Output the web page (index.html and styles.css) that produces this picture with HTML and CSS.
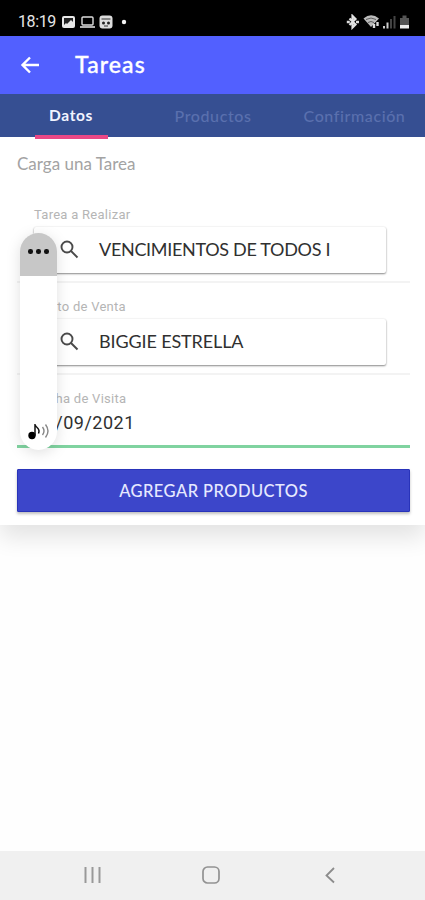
FILE: index.html
```html
<!DOCTYPE html>
<html lang="es">
<head>
<meta charset="utf-8">
<title>Tareas</title>
<link rel="stylesheet" href="styles.css">
</head>
<body>
<div class="screen">
  <div class="status">
    <span class="clock">18:19</span>
    <svg class="status-left" width="66" height="16" viewBox="0 0 66 16">
      <rect x="1" y="2" width="13" height="12" rx="2" fill="#e8e8e8"/>
      <path d="M3 11V4h9v4l-2-2-4 4-1-1z" fill="#222"/>
      <rect x="21" y="3" width="11" height="8" rx="1" fill="none" stroke="#ddd" stroke-width="1.4"/>
      <path d="M19 13h15" stroke="#ddd" stroke-width="1.6"/>
      <rect x="38.500" y="1.500" width="13" height="13" rx="3" fill="#ddd"/>
      <path d="M40.500 5h9M43 12h4" stroke="#333" stroke-width="1.200"/>
      <circle cx="42.500" cy="9" r="1.500" fill="#222"/><circle cx="47.500" cy="9" r="1.500" fill="#222"/>
      <circle cx="63" cy="8" r="2.200" fill="#f4f4f4"/>
    </svg>
    <svg class="status-right" width="64" height="16" viewBox="0 0 64 16">
      <path d="M3.500 4.500l6 6-3 3V2l3 3-6 6" fill="none" stroke="#e2e2e2" stroke-width="2.200"/>
      <path d="M.8 8h3M10 8h3" stroke="#ddd" stroke-width="2.400"/>
      <path d="M17.500 4.500Q25 -2 33 4.500L25 13z" fill="#bbb"/>
      <path d="M20 5.500q5-3 10 0M22 8.500q3-2 6 0" fill="none" stroke="#444" stroke-width=".8"/>
      <path d="M28 10v4M31.500 8v4" stroke="#ddd" stroke-width="2.400"/>
      <path d="M38 12v2.500M41.500 8.500v6" stroke="#ccc" stroke-width="2"/>
      <path d="M45 5v9.500M48.500 2v12.500" stroke="#444" stroke-width="2"/>
      <path d="M54 4h2.500V1.500h4V4H63v7h-9z" fill="#555"/>
      <path d="M54 11h9v3.500h-9z" fill="#eee"/>
    </svg>
  </div>

  <header class="appbar">
    <svg width="20" height="20" viewBox="0 0 20 20" fill="none" stroke="#fff" stroke-width="2.400"><path d="M19 10H2.500M10 2.500L2.500 10l7.500 7.500"/></svg>
    <h1>Tareas</h1>
  </header>

  <nav class="tabs">
    <span class="tab active">Datos</span>
    <span class="tab products">Productos</span>
    <span class="tab confirm">Confirmación</span>
  </nav>

  <main class="card">
    <h2>Carga una Tarea</h2>
    <section class="field first">
      <label>Tarea a Realizar</label>
      <div class="picker">
        <svg width="19" height="19" viewBox="0 0 19 19" fill="none" stroke="#4a4a4a" stroke-width="1.900"><circle cx="7" cy="7" r="5.500"/><path d="M11 11l6.500 6.500"/></svg>
        <span class="task">VENCIMIENTOS DE TODOS I</span>
      </div>
    </section>
    <section class="field">
      <label>Punto de Venta</label>
      <div class="picker">
        <svg width="19" height="19" viewBox="0 0 19 19" fill="none" stroke="#4a4a4a" stroke-width="1.900"><circle cx="7" cy="7" r="5.500"/><path d="M11 11l6.500 6.500"/></svg>
        <span class="store">BIGGIE ESTRELLA</span>
      </div>
    </section>
    <section class="field date">
      <label>Fecha de Visita</label>
      <div class="value">20/09/2021</div>
    </section>
    <button class="submit">AGREGAR PRODUCTOS</button>
  </main>

  <aside class="volume">
    <div class="more"><i></i><i></i><i></i></div>
    <svg width="24" height="20" viewBox="0 0 24 20">
      <circle cx="5" cy="14.500" r="3.700" fill="#000"/>
      <path d="M8 14.500V3c.5 4.500 6 4 3.500 9.500" fill="none" stroke="#111" stroke-width="1.500"/>
      <path d="M15.500 6q3 4 0 8M18.500 3.500q5 6.500 0 13" fill="none" stroke="#888" stroke-width="1.400"/>
    </svg>
  </aside>

  <footer class="navbar">
    <svg width="17" height="18" viewBox="0 0 17 18" stroke="#999" stroke-width="2"><path d="M1.500 1v16M8.500 1v16M15.500 1v16"/></svg>
    <svg class="home" width="18" height="18" viewBox="0 0 18 18" fill="none" stroke="#929292" stroke-width="1.700"><rect x="1" y="1" width="16" height="16" rx="4.500"/></svg>
    <svg width="10" height="18" viewBox="0 0 10 18" fill="none" stroke="#8c8c8c" stroke-width="1.800"><path d="M9 2L1.500 9.500 9 16.500"/></svg>
  </footer>
</div>
</body>
</html>
```
FILE: styles.css
```css
* { box-sizing: border-box; }
body { margin: 0; background: #fff; font-family: Lato, "Open Sans", sans-serif; }
.screen { position: relative; width: 425px; height: 900px; display: flex; flex-direction: column; overflow: hidden; background: #fefefe; }
svg { display: block; flex: none; }

.status { height: 36px; flex: none; background: #000; display: flex; align-items: center; padding: 8px 15px 0 18px; }
.clock { width: 43px; font: 400 16px/20px Roboto, sans-serif; letter-spacing: -.4px; color: #e6e6e6; }
.status-right { margin-left: auto; }

.appbar { height: 58px; flex: none; background: #5260ff; display: flex; align-items: center; padding-left: 20px; gap: 35px; }
.appbar h1 { margin: 0; font: 500 23px/28px Lato, sans-serif; letter-spacing: 1.1px; color: #fff; -webkit-text-stroke: .35px #fff; position: relative; top: -1px; }

.tabs { height: 43px; flex: none; background: #364f92; display: grid; grid-template-columns: 142px 142px 141px; z-index: 1; }
.tab { position: relative; text-align: center; font-size: 16px; line-height: 43px; font-weight: 500; letter-spacing: .6px; color: #5a70ae; }
.tab.active { color: #f2f4ff; font-weight: 700; font-size: 15.500px; letter-spacing: .6px; }
.tab.active::after { content: ""; position: absolute; left: 35px; width: 73px; bottom: -2px; height: 4px; background: #eb4886; }

.card { height: 388px; flex: none; background: #fff; padding: 16px 15px 0 17px; box-shadow: 0 12px 22px rgba(0, 0, 0, .11); }
.card h2 { margin: 0; font-size: 17px; line-height: 22px; font-weight: 400; color: #a3a3a3; }
.field { height: 92px; padding: 9px 0 0 17px; border-bottom: 2px solid #f3f3f3; }
.field.first { height: 108px; padding-top: 25px; }
.field label { display: block; height: 27px; padding-top: 7px; font: 13px/16px Roboto, sans-serif; letter-spacing: .27px; color: #b5b5b5; }
.picker { width: 352px; height: 46px; display: flex; align-items: center; padding: 0 0 2px 26px; gap: 20px; border-radius: 2px; background: #fff; box-shadow: 0 1px 2px rgba(0, 0, 0, .45), 0 0 2px rgba(0, 0, 0, .08); font-size: 18px; color: #303030; white-space: nowrap; }
.task { letter-spacing: -.31px; }
.store { letter-spacing: -.12px; }
.date { height: 73px; border-bottom: 3px solid #80d3a0; }
.value { padding-top: 1px; font: 18px/22px Roboto, sans-serif; letter-spacing: .5px; color: #303030; }
.submit { display: block; width: 393px; height: 43px; margin: 21px 0 0; padding: 0; border: 1px solid #2833ba; border-radius: 1px; background: #3c46ca; box-shadow: 0 2px 3px rgba(0, 0, 0, .25); font: 500 16.500px/20px Lato, sans-serif; letter-spacing: .45px; color: #e6e9ff; }

.volume { position: absolute; left: 20px; top: 233px; width: 37px; height: 217px; border-radius: 19px; overflow: hidden; background: #fff; display: flex; flex-direction: column; align-items: center; justify-content: space-between; padding-bottom: 9px; filter: drop-shadow(0 3px 7px rgba(0, 0, 0, .12)); }
.more { width: 37px; height: 43px; padding-top: 16px; background: #c7c7c7; display: flex; justify-content: center; gap: 3.500px; }
.more i { width: 4.500px; height: 4.500px; border-radius: 50%; background: #111; }

.navbar { height: 49px; flex: none; margin-top: auto; background: #f0f0f0; display: grid; grid-template-columns: 118px 123px 1fr; align-items: center; padding: 0 0 2px 84px; }
```
